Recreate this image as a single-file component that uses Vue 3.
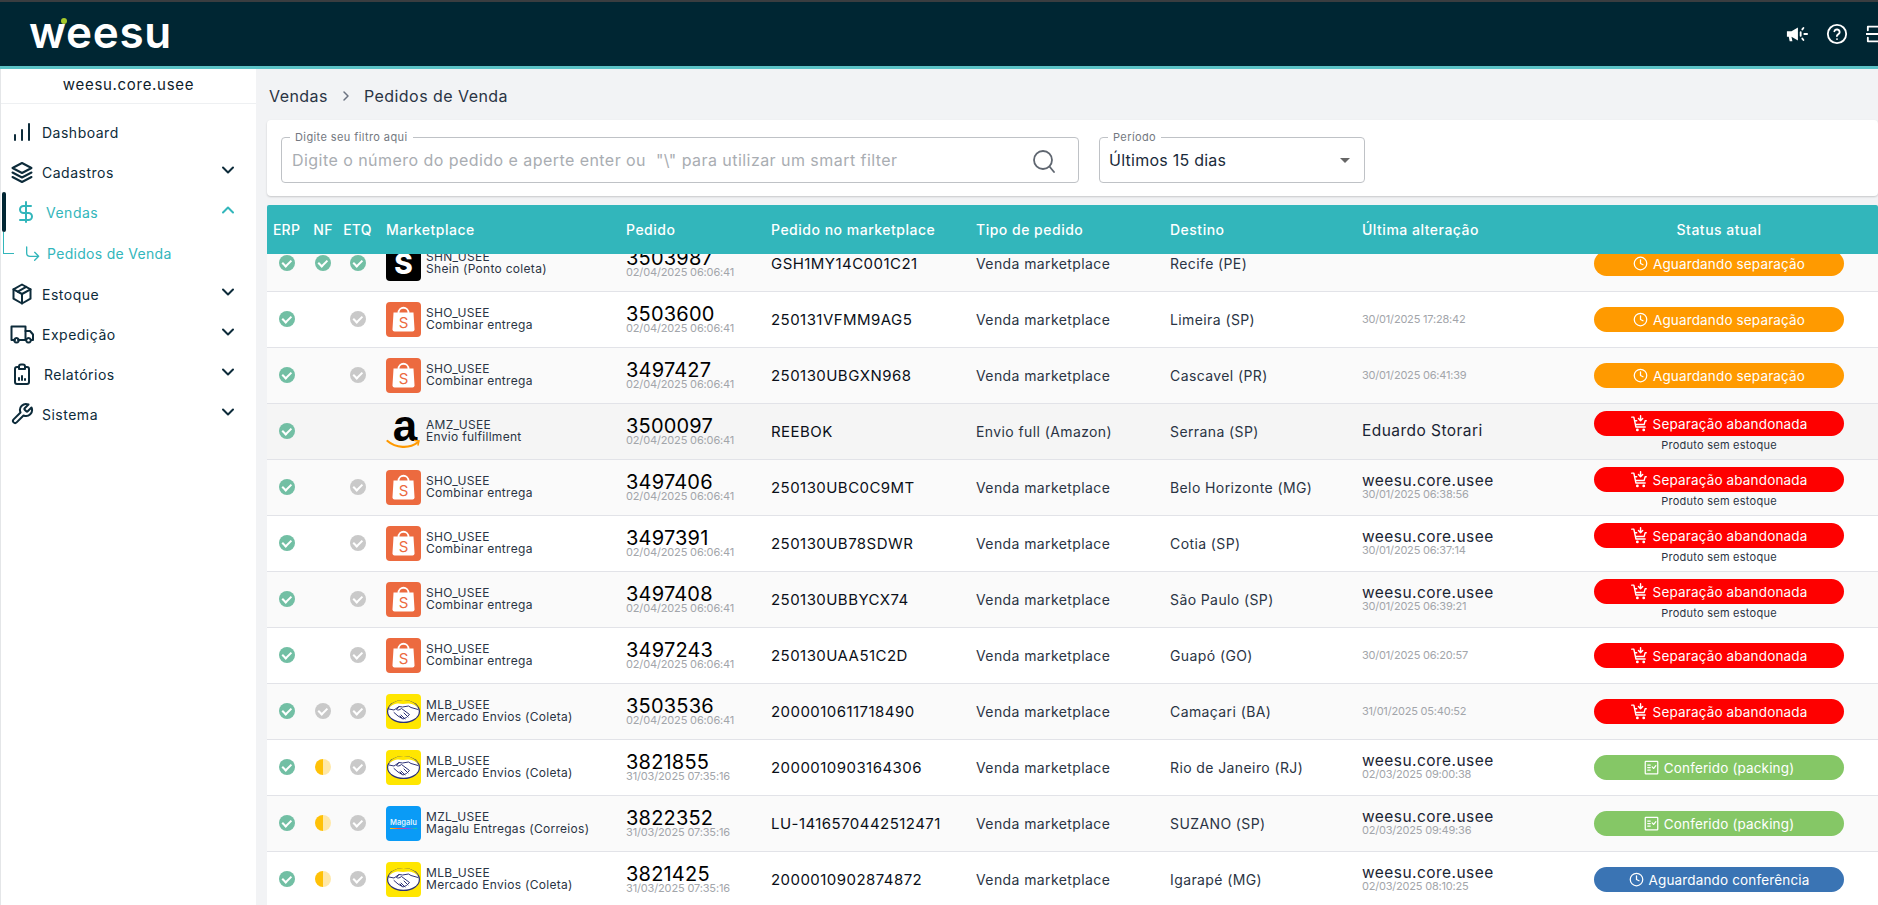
<script setup>
const nav = [
  { label: 'Dashboard', cls: 'dash', paths: ['M5 20v-5', 'M12 20V10', 'M19 20V4'] },
  { label: 'Cadastros', cls: 'cad', chev: 'down', paths: ['M12 3 2.5 8l9.5 5 9.5-5z', 'M2.5 12.5l9.5 5 9.5-5', 'M2.5 17l9.5 5 9.5-5'] },
  { label: 'Vendas', cls: 'active', chev: 'up', paths: ['M12 2v20', 'M17 6H9.5a3.5 3.5 0 0 0 0 7h5a3.5 3.5 0 0 1 0 7H6'] },
  { label: 'Pedidos de Venda', sub: true },
  { label: 'Estoque', cls: 'est', chev: 'down', paths: ['M12 2.5l8.5 4.8v9.4L12 21.5l-8.5-4.8V7.3z', 'M12 12l8.5-4.7', 'M12 12v9.5', 'M12 12 3.5 7.3', 'M16.2 4.9 7.8 9.6'] },
  { label: 'Expedição', cls: 'exp', chev: 'down', paths: ['M5 18H1.5V4.5h14V18H8', 'M15.5 9H20l3 3.5V18h-2', 'M15.5 18H16', 'M6.5 16a2.3 2.3 0 1 0 .01 0z', 'M18.5 16a2.3 2.3 0 1 0 .01 0z'] },
  { label: 'Relatórios', cls: 'rel', chev: 'down', paths: ['M9 5H7a2 2 0 0 0-2 2v13a2 2 0 0 0 2 2h10a2 2 0 0 0 2-2V7a2 2 0 0 0-2-2h-2', 'M9 4.5a2 2 0 0 1 2-2h2a2 2 0 0 1 2 2V7H9z', 'M9 18v-2', 'M12 18v-4', 'M15 18v-1'] },
  { label: 'Sistema', cls: 'sis', chev: 'down', paths: ['M14.7 6.3a1 1 0 0 0 0 1.4l1.6 1.6a1 1 0 0 0 1.4 0l3.77-3.77a6 6 0 0 1-7.94 7.94l-6.91 6.91a2.12 2.12 0 0 1-3-3l6.91-6.91a6 6 0 0 1 7.94-7.94l-3.76 3.76z'] },
]

const columns = ['ERP', 'NF', 'ETQ', 'Marketplace', 'Pedido', 'Pedido no marketplace', 'Tipo de pedido', 'Destino', 'Última alteração']

const d1 = '02/04/2025 06:06:41'
const d2 = '31/03/2025 07:35:16'
const rows = [
  { nf: 'ok', etq: 'ok', logo: 'shein', code: 'SHN_USEE', ship: 'Shein (Ponto coleta)', id: '3503987', date: d1, mp: 'GSH1MY14C001C21', tipo: 'Venda marketplace', dest: 'Recife (PE)', st: 'wait' },
  { etq: 'off', logo: 'shopee', code: 'SHO_USEE', ship: 'Combinar entrega', id: '3503600', date: d1, mp: '250131VFMM9AG5', tipo: 'Venda marketplace', dest: 'Limeira (SP)', when: '30/01/2025 17:28:42', st: 'wait' },
  { etq: 'off', logo: 'shopee', code: 'SHO_USEE', ship: 'Combinar entrega', id: '3497427', date: d1, mp: '250130UBGXN968', tipo: 'Venda marketplace', dest: 'Cascavel (PR)', when: '30/01/2025 06:41:39', st: 'wait' },
  { logo: 'amazon', code: 'AMZ_USEE', ship: 'Envio fulfillment', id: '3500097', date: d1, mp: 'REEBOK', tipo: 'Envio full (Amazon)', dest: 'Serrana (SP)', user: 'Eduardo Storari', st: 'aband', note: true, hover: true },
  { etq: 'off', logo: 'shopee', code: 'SHO_USEE', ship: 'Combinar entrega', id: '3497406', date: d1, mp: '250130UBC0C9MT', tipo: 'Venda marketplace', dest: 'Belo Horizonte (MG)', user: 'weesu.core.usee', when: '30/01/2025 06:38:56', st: 'aband', note: true },
  { etq: 'off', logo: 'shopee', code: 'SHO_USEE', ship: 'Combinar entrega', id: '3497391', date: d1, mp: '250130UB78SDWR', tipo: 'Venda marketplace', dest: 'Cotia (SP)', user: 'weesu.core.usee', when: '30/01/2025 06:37:14', st: 'aband', note: true },
  { etq: 'off', logo: 'shopee', code: 'SHO_USEE', ship: 'Combinar entrega', id: '3497408', date: d1, mp: '250130UBBYCX74', tipo: 'Venda marketplace', dest: 'São Paulo (SP)', user: 'weesu.core.usee', when: '30/01/2025 06:39:21', st: 'aband', note: true },
  { etq: 'off', logo: 'shopee', code: 'SHO_USEE', ship: 'Combinar entrega', id: '3497243', date: d1, mp: '250130UAA51C2D', tipo: 'Venda marketplace', dest: 'Guapó (GO)', when: '30/01/2025 06:20:57', st: 'aband' },
  { nf: 'off', etq: 'off', logo: 'meli', code: 'MLB_USEE', ship: 'Mercado Envios (Coleta)', id: '3503536', date: d1, mp: '2000010611718490', tipo: 'Venda marketplace', dest: 'Camaçari (BA)', when: '31/01/2025 05:40:52', st: 'aband' },
  { nf: 'half', etq: 'off', logo: 'meli', code: 'MLB_USEE', ship: 'Mercado Envios (Coleta)', id: '3821855', date: d2, mp: '2000010903164306', tipo: 'Venda marketplace', dest: 'Rio de Janeiro (RJ)', user: 'weesu.core.usee', when: '02/03/2025 09:00:38', st: 'packed' },
  { nf: 'half', etq: 'off', logo: 'magalu', code: 'MZL_USEE', ship: 'Magalu Entregas (Correios)', id: '3822352', date: d2, mp: 'LU-1416570442512471', tipo: 'Venda marketplace', dest: 'SUZANO (SP)', user: 'weesu.core.usee', when: '02/03/2025 09:49:36', st: 'packed' },
  { nf: 'half', etq: 'off', logo: 'meli', code: 'MLB_USEE', ship: 'Mercado Envios (Coleta)', id: '3821425', date: d2, mp: '2000010902874872', tipo: 'Venda marketplace', dest: 'Igarapé (MG)', user: 'weesu.core.usee', when: '02/03/2025 08:10:25', st: 'conf' },
]

const statusLabel = {
  wait: 'Aguardando separação',
  aband: 'Separação abandonada',
  packed: 'Conferido (packing)',
  conf: 'Aguardando conferência',
}
</script>

<template>
  <div class="page">
    <header class="topbar">
      <div class="logo"><span class="logo-word">weesu</span><i class="logo-dot"></i></div>
      <div class="top-actions">
        <svg class="top-icon" viewBox="0 0 24 24" fill="none" stroke="#fff" stroke-width="2" stroke-linecap="round">
          <path fill="#fff" stroke="none" d="M1 9h5l7-4v14l-7-4H6l1 5H4l-1-5H1z" />
          <path d="M16 10v4M19 5.5l-1.2 1.5M19 18.5 17.800 17M20 12h3" />
        </svg>
        <svg class="top-icon" viewBox="0 0 24 24" fill="none" stroke="#fff" stroke-width="2" stroke-linecap="round" stroke-linejoin="round">
          <circle cx="12" cy="12" r="10" />
          <path d="M9.100 9a3 3 0 0 1 5.800 1c0 2-3 2.500-3 4.300" />
          <path d="M12 17.500h.01" />
        </svg>
        <svg class="top-icon" viewBox="0 0 24 24" fill="none" stroke="#fff" stroke-width="2" stroke-linecap="round" stroke-linejoin="round">
          <path d="M2 8V4h20v4M2 16v4h20v-4" />
          <path d="M0 12h22M18 8l4 4-4 4" />
        </svg>
      </div>
    </header>
    <div class="teal-line"></div>

    <div class="body">
      <aside class="sidebar">
        <div class="workspace">weesu.core.usee</div>
        <nav class="nav">
          <template v-for="item in nav" :key="item.label">
            <div v-if="item.sub" class="nav-sub">
              <i class="connector"></i>
              <svg class="sub-arrow" viewBox="0 0 24 24" fill="none" stroke="#32b6bb" stroke-width="2" stroke-linecap="round" stroke-linejoin="round">
                <path d="M4 3v9a5 5 0 0 0 5 5h13M16 11l6 6-6 6" />
              </svg>
              <span>{{ item.label }}</span>
            </div>
            <div v-else class="nav-item" :class="item.cls">
              <svg class="nav-icon" viewBox="0 0 24 24" fill="none" stroke="currentColor" stroke-width="2" stroke-linecap="round" stroke-linejoin="round">
                <path v-for="p in item.paths" :key="p" :d="p" />
              </svg>
              <span class="nav-label">{{ item.label }}</span>
              <svg v-if="item.chev" class="chev" viewBox="0 0 14 14" fill="none" stroke="currentColor" stroke-width="2" stroke-linecap="round" stroke-linejoin="round">
                <path :d="item.chev === 'up' ? 'M2 9.500 7 4.500l5 5' : 'M2 4.500l5 5 5-5'" />
              </svg>
            </div>
          </template>
        </nav>
      </aside>

      <main class="main">
        <div class="crumbs">
          <span>Vendas</span>
          <svg class="crumb-sep" viewBox="0 0 10 12" fill="none" stroke="#6b7280" stroke-width="1.500" stroke-linecap="round" stroke-linejoin="round"><path d="M3 2l4 4-4 4" /></svg>
          <span>Pedidos de Venda</span>
        </div>

        <section class="filters">
          <div class="field search">
            <span class="field-label">Digite seu filtro aqui</span>
            <span class="placeholder">Digite o número do pedido e aperte enter ou &nbsp;"\" para utilizar um smart filter</span>
            <svg class="search-icon" viewBox="0 0 24 24" fill="none" stroke="#5f6670" stroke-width="1.800" stroke-linecap="round"><circle cx="11" cy="11" r="9" /><path d="M17.500 17.500 22 23" /></svg>
          </div>
          <div class="field period">
            <span class="field-label">Período</span>
            <span class="value">Últimos 15 dias</span>
            <i class="caret"></i>
          </div>
        </section>

        <section class="table">
          <div class="thead grid">
            <div v-for="(c, i) in columns" :key="c" class="th" :class="{ mini: i < 3, first: i === 3 }">{{ c }}</div>
            <div class="th status-h">Status atual</div>
          </div>
          <div class="tbody-clip">
            <div class="tbody">
              <div v-for="r in rows" :key="r.id" class="row grid" :class="{ hover: r.hover }">
                <div class="flag"><i class="dot ok"></i></div>
                <div class="flag"><i v-if="r.nf" class="dot" :class="r.nf"></i></div>
                <div class="flag"><i v-if="r.etq" class="dot" :class="r.etq"></i></div>
                <div class="market">
                  <div class="mlogo" :class="r.logo">
                    <span v-if="r.logo === 'shein'">S</span>
                    <template v-else-if="r.logo === 'shopee'">
                      <svg viewBox="0 0 35 35"><path fill="none" stroke="#fff" stroke-width="1.800" d="M12.500 11c0-7 10-7 10 0" /><path fill="#fff" d="M7.500 10.500h20l1 17a2 2 0 0 1-2 2H8.500a2 2 0 0 1-2-2z" /></svg>
                      <b>S</b>
                    </template>
                    <template v-else-if="r.logo === 'amazon'">
                      <b>a</b>
                      <svg viewBox="0 0 35 12"><path fill="none" stroke="#f90" stroke-width="2.200" stroke-linecap="round" d="M1.500 2c8 7 22 8 30 1.500" /><path fill="none" stroke="#f90" stroke-width="1.500" stroke-linecap="round" d="M28.500 1.500l4.500.5-1 4" /></svg>
                    </template>
                    <svg v-else-if="r.logo === 'meli'" viewBox="0 0 35 35">
                      <ellipse cx="17.500" cy="17.500" rx="16.500" ry="11.500" fill="#2d3277" />
                      <ellipse cx="17.500" cy="17.500" rx="15.300" ry="10.300" fill="#fff" />
                      <path fill="#ffe600" d="M2.500 14c6-5 9-5 14.500-4 6-1 10-1 15.500 4-3-5-8-8-15-8S5 9 2.500 14z" />
                      <path fill="none" stroke="#2d3277" stroke-width="1" stroke-linecap="round" stroke-linejoin="round" d="M3 15l5 1 5-3.500 3.500.5 6-1 2.500 1.500 7 2M13 12.500l-2.500 3c1.500 1 3 .5 5-1l8 6-3 3-3.500 1.500-5-3-4-3.500M16 24l-2-2M19 25l-4-4M22 23l-4-4" />
                    </svg>
                    <span v-else>Magalu<i class="rainbow"></i></span>
                  </div>
                  <div class="market-text">
                    <span>{{ r.code }}</span>
                    <span>{{ r.ship }}</span>
                  </div>
                </div>
                <div class="order"><b>{{ r.id }}</b><span>{{ r.date }}</span></div>
                <div class="mp">{{ r.mp }}</div>
                <div class="cell">{{ r.tipo }}</div>
                <div class="cell">{{ r.dest }}</div>
                <div class="change">
                  <b v-if="r.user">{{ r.user }}</b>
                  <span v-if="r.when">{{ r.when }}</span>
                </div>
                <div class="status">
                  <div class="pill" :class="r.st">
                    <svg v-if="r.st === 'wait' || r.st === 'conf'" viewBox="0 0 24 24" fill="none" stroke="#fff" stroke-width="2" stroke-linecap="round" stroke-linejoin="round"><circle cx="12" cy="12" r="10" /><path d="M12 6v6l4 2" /></svg>
                    <svg v-else-if="r.st === 'aband'" class="cart" viewBox="0 0 24 24" fill="none" stroke="#fff" stroke-width="2" stroke-linecap="round" stroke-linejoin="round"><path d="M1 3h3l3 14h13" /><path d="M5.500 8H8M21.500 8H20l-1.500 5.500H7.500" /><path d="M13.500 1v7M10.500 5l3 3 3-3" /><circle cx="9" cy="21" r="1" /><circle cx="18" cy="21" r="1" /></svg>
                    <svg v-else viewBox="0 0 24 24" fill="none" stroke="#fff" stroke-width="2" stroke-linecap="round" stroke-linejoin="round"><rect x="2" y="2" width="20" height="20" rx="1" /><path d="M6 8h4M6 12h4M6 16h4M13 11l2.500 2.500L19 9" /></svg>
                    <span>{{ statusLabel[r.st] }}</span>
                  </div>
                  <div v-if="r.note" class="note">Produto sem estoque</div>
                </div>
              </div>
            </div>
          </div>
        </section>
      </main>
    </div>
  </div>
</template>

<style>
html, body { margin: 0; height: 100%; overflow: hidden; }
</style>

<style scoped>
.page {
  height: 905px;
  overflow: hidden;
  display: flex;
  flex-direction: column;
  font-family: Inter, "Noto Sans", sans-serif;
  color: #2a3444;
  background: #f2f3f5;
  border-top: 2px solid #3a3d40;
  box-sizing: border-box;
}
.topbar {
  height: 64px;
  flex: none;
  background: #002633;
  display: flex;
  align-items: center;
  justify-content: space-between;
  padding-left: 29px;
}
.logo { position: relative; }
.logo-word {
  display: block;
  font-size: 44px;
  line-height: 44px;
  font-weight: 600;
  letter-spacing: 0.7px;
  color: #fff;
  margin-top: -4px;
}
.logo-dot {
  position: absolute;
  left: 32px;
  top: 4px;
  width: 6px;
  height: 6px;
  border-radius: 50%;
  background: #a6c92b;
}
.top-actions {
  display: flex;
  align-items: center;
  gap: 18px;
  margin-right: -10px;
}
.top-icon { width: 22px; height: 22px; display: block; }
.teal-line { height: 3px; flex: none; background: #5bc2c6; }

.body { flex: 1; display: flex; min-height: 0; }
.sidebar {
  width: 256px;
  flex: none;
  background: #fff;
  border-left: 1px solid #e4e6e8;
  box-sizing: border-box;
}
.workspace {
  height: 34px;
  border-bottom: 1px solid #eef0f2;
  text-align: center;
  font-size: 15px;
  line-height: 31px;
  letter-spacing: 0.7px;
  color: #0e1c2b;
}
.nav { display: flex; flex-direction: column; padding-top: 8px; }
.nav-item {
  position: relative;
  height: 40px;
  display: flex;
  align-items: center;
  padding-left: 9px;
  color: #0d2b3a;
}
.nav-icon { width: 24px; height: 24px; flex: none; }
.nav-label {
  margin-left: 8px;
  font-size: 14px;
  letter-spacing: 0.5px;
}
.chev {
  position: absolute;
  left: 220px;
  top: 11px;
  width: 14px;
  height: 14px;
}
.nav-item.active { color: #32b6bb; padding-left: 13px; }
.nav-item.active .nav-label { margin-left: 8px; }
.nav-item.active::before {
  content: "";
  position: absolute;
  left: 1px;
  top: 0;
  width: 4px;
  height: 40px;
  border-radius: 2px;
  background: #002633;
}
.nav-item.rel .nav-label { margin-left: 10px; }
.nav-sub {
  position: relative;
  height: 42px;
  display: flex;
  align-items: center;
  padding-left: 23px;
  color: #32b6bb;
  font-size: 14px;
  letter-spacing: 0.3px;
}
.connector {
  position: absolute;
  left: 2px;
  top: 0;
  width: 10px;
  height: 21px;
  border-left: 1px solid #32b6bb;
  border-bottom: 1px solid #32b6bb;
}
.sub-arrow { width: 16px; height: 16px; margin-right: 7px; }

.main {
  flex: 1;
  min-width: 0;
  padding-left: 11px;
  display: flex;
  flex-direction: column;
}
.crumbs {
  height: 51px;
  flex: none;
  display: flex;
  align-items: center;
  gap: 10px;
  padding-left: 2px;
  padding-top: 2px;
  font-size: 16px;
  letter-spacing: 0.45px;
  color: #2a3444;
  box-sizing: border-box;
}
.crumb-sep { width: 10px; height: 12px; margin: 0 3px; }
.filters {
  height: 76px;
  flex: none;
  background: #fff;
  border-radius: 4px;
  box-shadow: 0 1px 2px rgba(0, 0, 0, 0.18);
  padding: 17px 14px 0;
  box-sizing: border-box;
  display: flex;
  gap: 20px;
  align-items: flex-start;
}
.field {
  position: relative;
  height: 46px;
  border: 1px solid #bfc2c6;
  border-radius: 4px;
  box-sizing: border-box;
  display: flex;
  align-items: center;
}
.field-label {
  position: absolute;
  left: 8px;
  top: -8px;
  padding: 0 5px 0 5px;
  background: #fff;
  font-size: 11px;
  line-height: 14px;
  letter-spacing: 0.4px;
  color: #737880;
}
.search { width: 798px; padding-left: 10px; }
.placeholder { font-size: 16px; color: #a9adb2; letter-spacing: 0.45px; white-space: pre; }
.search-icon { position: absolute; right: 22px; top: 11px; width: 24px; height: 24px; }
.period { width: 266px; padding-left: 9px; }
.value { font-size: 16px; letter-spacing: 0.25px; color: #1a2a3a; }
.caret {
  position: absolute;
  right: 14px;
  top: 20px;
  border-left: 5px solid transparent;
  border-right: 5px solid transparent;
  border-top: 5px solid #666;
}

.table {
  flex: 1;
  min-height: 0;
  margin-top: 9px;
  display: flex;
  flex-direction: column;
}
.grid {
  display: grid;
  grid-template-columns: 39px 34px 35px 251px 145px 205px 194px 192px 232px 250px 34px;
}
.thead {
  height: 49px;
  flex: none;
  background: #32b6bb;
  color: #fff;
  align-items: center;
  font-size: 14px;
  font-weight: 500;
  letter-spacing: 0.5px;
  border-radius: 2px 2px 0 0;
}
.th { white-space: nowrap; margin-top: -1px; }
.th.mini { text-align: center; font-size: 14px; letter-spacing: 0.25px; }
.th.first { padding-left: 11px; }
.status-h { grid-column: span 2; text-align: center; padding-right: 34px; }
.tbody-clip { flex: 1; min-height: 0; overflow: hidden; background: #fff; }
.tbody { margin-top: -18px; }
.row {
  height: 56px;
  box-sizing: border-box;
  border-bottom: 1px solid #e2e3e8;
  align-items: center;
  background: #fff;
  font-size: 14px;
}
.row:nth-child(odd) { background: #fafafa; }
.row.hover { background: #f5f5f5; }
.flag { display: flex; justify-content: center; margin-top: -2px; }
.dot {
  width: 16px;
  height: 16px;
  border-radius: 50%;
  position: relative;
  display: block;
}
.dot.ok { background: #72bfa4; }
.dot.off { background: #c9c9c9; }
.dot.ok::after, .dot.off::after {
  content: "";
  position: absolute;
  left: 5px;
  top: 3.500px;
  width: 4px;
  height: 6.500px;
  border-right: 2px solid #fff;
  border-bottom: 2px solid #fff;
  transform: rotate(45deg);
}
.dot.half { background: linear-gradient(90deg, #ffc107 50%, #ffe8a8 50%); }
.market { display: flex; align-items: center; padding-left: 11px; gap: 5px; }
.mlogo {
  position: relative;
  width: 35px;
  height: 35px;
  border-radius: 4px;
  flex: none;
  overflow: hidden;
  display: flex;
  align-items: center;
  justify-content: center;
}
.mlogo > svg { display: block; width: 100%; }
.shein { background: #000; color: #fff; font-size: 28px; font-weight: 800; }
.shopee { background: #ec6a3f; }
.shopee b {
  position: absolute;
  left: 0;
  right: 0;
  top: 11px;
  text-align: center;
  color: #ec6a3f;
  font-size: 15px;
  line-height: 20px;
  font-weight: 400;
}
.amazon { overflow: visible; display: block; }
.amazon b {
  display: block;
  text-align: center;
  color: #000;
  font-family: "Liberation Sans", sans-serif;
  font-size: 44px;
  line-height: 24px;
  padding-left: 3px;
  font-weight: 700;
}
.amazon svg { position: absolute; left: 0; bottom: -2px; height: 12px; }
.meli { background: #ffe600; }
.magalu {
  background: #0a9bf6;
  color: #dff2ff;
  font-size: 7.500px;
  font-weight: 600;
  flex-direction: column;
}
.magalu span { display: block; text-align: center; }
.rainbow {
  display: block;
  height: 1px;
  margin-top: 1px;
  background: linear-gradient(90deg, #ffd000, #ff4d4d, #7c4dff, #00e0a0);
}
.market-text {
  display: flex;
  flex-direction: column;
  font-size: 12px;
  line-height: 12px;
  letter-spacing: 0.3px;
  white-space: nowrap;
  color: #2a3444;
  margin-top: -1px;
}
.order { display: flex; flex-direction: column; margin-top: -1px; }
.order b {
  font-size: 20px;
  line-height: 18px;
  font-weight: 400;
  letter-spacing: 0.2px;
  color: #000;
}
.order span {
  font-size: 11px;
  line-height: 11px;
  color: #a2a5aa;
  letter-spacing: -0.15px;
}
.mp { font-size: 15px; color: #0a0f18; letter-spacing: 0.45px; white-space: nowrap; margin-top: -1px; }
.cell { letter-spacing: 0.4px; color: #2a3444; white-space: nowrap; margin-top: -1px; }
.change { display: flex; flex-direction: column; margin-top: -1px; }
.change b {
  font-size: 15.500px;
  line-height: 14px;
  font-weight: 400;
  letter-spacing: 0.45px;
  color: #1a2433;
}
.change span {
  font-size: 11px;
  line-height: 12px;
  color: #a2a5aa;
  letter-spacing: -0.2px;
}
.status { display: flex; flex-direction: column; align-items: center; }
.pill {
  width: 250px;
  height: 25px;
  border-radius: 13px;
  color: #fff;
  font-size: 13.500px;
  letter-spacing: 0.15px;
  display: flex;
  align-items: center;
  justify-content: center;
  gap: 5px;
}
.pill svg { width: 15px; height: 15px; }
.pill svg.cart { width: 17px; height: 17px; }
.pill.wait { background: #ff9a00; }
.pill.aband { background: #fe0000; }
.pill.packed { background: #85c766; }
.pill.conf { background: #3a74b4; }
.note { font-size: 11px; line-height: 14px; margin-top: 2px; letter-spacing: 0.25px; color: #2a3444; }
</style>
